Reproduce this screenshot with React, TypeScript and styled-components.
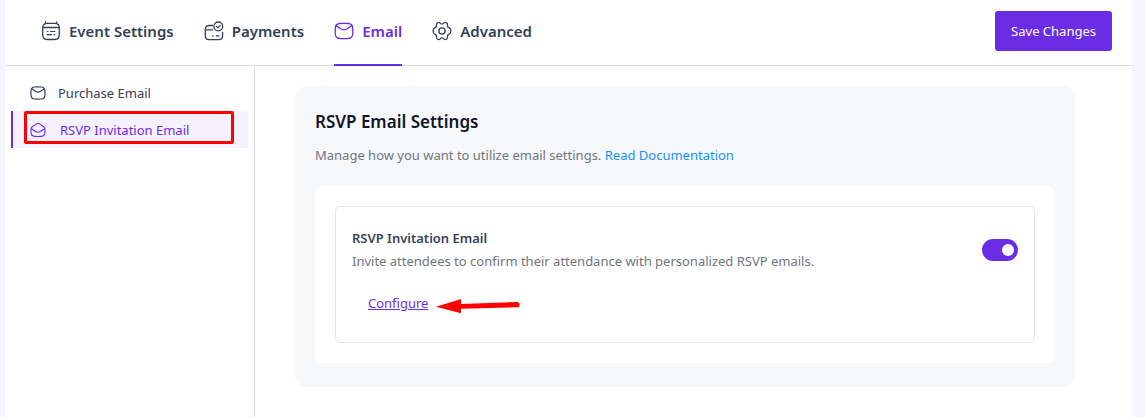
import React from "react";
import styled, { createGlobalStyle, css } from "styled-components";

const color = {
  primary: "#6b2de3",
  primaryTint: "#f5f1fe",
  ink: "#334155",
  heading: "#101529",
  title: "#3a4356",
  muted: "#6f7680",
  link: "#1890ff",
  page: "#f4f6fb",
  card: "#f7f8fa",
  rule: "#dddddd",
  box: "#e4e4ef",
  mark: "#ff0000",
};

const GlobalStyle = createGlobalStyle`
  *, *::before, *::after { box-sizing: border-box; }
  body {
    margin: 0;
    background: ${color.page};
    font-family: "Segoe UI", "Noto Sans", "Open Sans", sans-serif;
    font-size: 13px;
    line-height: 22px;
    color: ${color.ink};
  }
`;

const Page = styled.div`
  min-height: 100vh;
  padding: 0 13px 0 5px;
  display: flex;
`;

const Panel = styled.div`
  flex: 1;
  min-width: 0;
  display: flex;
  flex-direction: column;
  background: #fff;
`;

const Header = styled.header`
  display: flex;
  align-items: stretch;
  justify-content: space-between;
  border-bottom: 1px solid ${color.rule};
  padding: 0 20px 0 36px;
`;

const Tabs = styled.nav`
  display: flex;
  gap: 30px;
  margin-bottom: -1px;
`;

const Tab = styled.a<{ $active?: boolean }>`
  display: flex;
  align-items: center;
  gap: 8px;
  padding: 0 0 2px;
  border-bottom: 2px solid ${(p) => (p.$active ? color.primary : "transparent")};
  color: ${(p) => (p.$active ? color.primary : color.ink)};
  font-size: 15px;
  font-weight: 600;
  text-decoration: none;
  white-space: nowrap;
`;

const SaveButton = styled.button`
  height: 40px;
  margin: 11px 0 14px;
  padding: 0 16px;
  border: 0;
  border-radius: 3px;
  background: ${color.primary};
  color: #fff;
  font: inherit;
  white-space: nowrap;
  cursor: pointer;
`;

const Body = styled.div`
  flex: 1;
  display: flex;
`;

const Sidebar = styled.nav`
  flex: 0 0 250px;
  display: flex;
  flex-direction: column;
  padding: 8px 6px;
  border-right: 1px solid ${color.rule};
`;

const SideLink = styled.a<{ $active?: boolean }>`
  position: relative;
  display: flex;
  align-items: center;
  gap: 12px;
  height: 37px;
  padding-left: 17px;
  border-left: 2px solid transparent;
  color: ${color.ink};
  text-decoration: none;
  ${(p) =>
    p.$active &&
    css`
      gap: 14px;
      border-left-color: ${color.primary};
      background: ${color.primaryTint};
      color: ${color.primary};
    `}
`;

const Highlight = styled.span`
  position: absolute;
  inset: 0 14px 4px 11px;
  border: 3px solid ${color.mark};
  border-radius: 2px;
  pointer-events: none;
`;

const Main = styled.main`
  flex: 1;
  min-width: 0;
  padding: 20px 40px;
`;

const Card = styled.section`
  max-width: 780px;
  padding: 20px 20px 24px;
  border-radius: 12px;
  background: ${color.card};
`;

const CardTitle = styled.h2`
  margin: 0;
  color: ${color.heading};
  font-size: 17px;
  font-weight: 600;
  line-height: 32px;
`;

const CardText = styled.p`
  margin: 6px 0 20px;
  color: ${color.muted};
`;

const DocLink = styled.a`
  color: ${color.link};
  text-decoration: none;
`;

const Sheet = styled.div`
  padding: 20px;
  border-radius: 8px;
  background: #fff;
`;

const Setting = styled.div`
  display: flex;
  align-items: flex-start;
  justify-content: space-between;
  gap: 16px;
  padding: 20px 16px;
  border: 1px solid ${color.box};
  border-radius: 5px;
`;

const SettingTitle = styled.label`
  display: block;
  color: ${color.title};
  font-weight: 600;
`;

const SettingText = styled.p`
  margin: 0;
  color: ${color.muted};
  line-height: 24px;
`;

const ActionRow = styled.div`
  display: flex;
  align-items: center;
  gap: 8px;
  padding: 19px 16px 8px;
`;

const ConfigureLink = styled.a`
  color: ${color.primary};
  text-decoration: underline;
`;

const Toggle = styled.input`
  appearance: none;
  flex: none;
  display: flex;
  align-items: center;
  width: 36px;
  height: 22px;
  margin: 12px 0 0;
  padding: 0 4px;
  border-radius: 11px;
  background: #c5c9d3;
  cursor: pointer;

  &::before {
    content: "";
    width: 12px;
    height: 12px;
    border-radius: 50%;
    background: #fff;
  }

  &:checked {
    justify-content: flex-end;
    background: ${color.primary};
  }
`;

const Glyph = styled.svg`
  flex: none;
  fill: none;
  stroke: currentColor;
  stroke-linecap: round;
  stroke-linejoin: round;
`;

const CalendarIcon = () => (
  <Glyph width="20" height="20" viewBox="0 0 20 20" strokeWidth="1.3" aria-hidden="true">
    <path d="M4.5 1v1.4M15.5 1v1.4" />
    <path d="M1.7 7c0-3.4 1.5-4.7 4.6-4.7h7.4c3.1 0 4.6 1.3 4.6 4.7v6.5c0 3.4-1.5 5-4.6 5H6.3c-3.1 0-4.6-1.6-4.6-5z" />
    <path d="M1.9 6.5h16.2" />
    <path d="M6.2 10.5h.7M9.5 10.5h4.3M6.2 13.7h4.3M13.1 13.7h.7" strokeWidth="1.2" />
  </Glyph>
);

const PaymentsIcon = () => (
  <Glyph width="20" height="20" viewBox="0 0 20 20" strokeWidth="1.3" aria-hidden="true">
    <path d="M8.5 4.5H5.3c-2.7 0-4 1.3-4 3.8v6.4c0 2.6 1.3 3.9 3.9 3.9h9.5c2.6 0 3.9-1.3 3.9-3.9v-3.5" />
    <path d="M1.5 8.8h7.3M8.5 14.8h.7M12.3 14.8h2.6" />
    <circle cx="14.3" cy="5.4" r="4.4" />
    <path d="M12.5 5.6l1.3 1.2 2.3-2.5" strokeWidth="1.2" />
  </Glyph>
);

const MailIcon = ({ size = 20 }: { size?: number }) => (
  <Glyph width={size} height={size} viewBox="0 0 20 20" strokeWidth={size < 20 ? 1.5 : 1.3} aria-hidden="true">
    <path d="M1.3 7.2c.1-3.4 1.3-4.5 4.4-4.7 2.9-.2 5.7-.2 8.6 0 3.1.2 4.3 1.3 4.4 4.7.1 1.9.1 3.7 0 5.6-.1 3.4-1.3 4.5-4.4 4.7-2.9.2-5.7.2-8.6 0-3.1-.2-4.3-1.3-4.4-4.7-.1-1.9-.1-3.7 0-5.6z" />
    <path d="M2.2 4.6l4.6 3.2c2.3 1.4 4.1 1.4 6.4 0L17.8 4.6" />
  </Glyph>
);

const OpenMailIcon = () => (
  <Glyph width="16" height="16" viewBox="0 0 16 16" strokeWidth="1.1" aria-hidden="true">
    <path d="M1.1 6.8c-.1 1.5-.1 2.9 0 4.2.2 2.3 1.2 3.2 3.5 3.4 2.2.2 4.6.2 6.8 0 2.3-.2 3.3-1.1 3.5-3.4.1-1.3.1-2.7 0-4.2-.1-1-.5-1.6-1.2-2.1L9.6 1.9c-1.1-.7-2.1-.7-3.2 0L2.3 4.7c-.7.5-1.1 1.1-1.2 2.1z" />
    <path d="M1.4 6.8l4.2 2.7c1.7 1 3.1 1 4.8 0l4.2-2.7" />
  </Glyph>
);

const GearIcon = () => (
  <Glyph width="20" height="20" viewBox="0 0 20 20" strokeWidth="1.3" aria-hidden="true">
    <path d="M8.2 2.2C7.5 1.3 6.7 1.2 5.8 1.7c-1.2.6-1.5 1.3-1.3 2.3.2 1.3-.5 2.5-1.8 2.9C1.6 7.3 1.1 8 1.1 10s.5 2.7 1.6 3.1c1.3.4 2 1.6 1.8 2.9-.2 1 .1 1.7 1.3 2.3.9.5 1.7.4 2.4-.5 1-1.2 2.6-1.2 3.6 0 .7.9 1.5 1 2.4.5 1.2-.6 1.5-1.3 1.3-2.3-.2-1.3.5-2.5 1.8-2.9 1.1-.4 1.6-1.1 1.6-3.1s-.5-2.7-1.6-3.1c-1.3-.4-2-1.6-1.8-2.9.2-1-.1-1.7-1.3-2.3-.9-.5-1.7-.4-2.4.5-1 1.2-2.6 1.2-3.6 0z" />
    <circle cx="10" cy="10" r="3.1" />
  </Glyph>
);

const PointerArrow = () => (
  <svg width="84" height="22" viewBox="0 0 84 22" aria-hidden="true">
    <path d="M0 14.7L25 7v4.9L81 10a2.6 2.6 0 0 1 0 5.3L25 16.8v4.5z" fill={color.mark} />
  </svg>
);

export default function App() {
  return (
    <Page>
      <GlobalStyle />
      <Panel>
        <Header>
          <Tabs aria-label="Settings">
            <Tab href="#event"><CalendarIcon />Event Settings</Tab>
            <Tab href="#payments"><PaymentsIcon />Payments</Tab>
            <Tab href="#email" $active aria-current="page"><MailIcon />Email</Tab>
            <Tab href="#advanced"><GearIcon />Advanced</Tab>
          </Tabs>
          <SaveButton type="button">Save Changes</SaveButton>
        </Header>
        <Body>
          <Sidebar aria-label="Email settings">
            <SideLink href="#purchase"><MailIcon size={16} />Purchase Email</SideLink>
            <SideLink href="#rsvp" $active aria-current="page">
              <OpenMailIcon />RSVP Invitation Email
              <Highlight />
            </SideLink>
          </Sidebar>
          <Main>
            <Card>
              <CardTitle>RSVP Email Settings</CardTitle>
              <CardText>
                Manage how you want to utilize email settings. <DocLink href="#docs">Read Documentation</DocLink>
              </CardText>
              <Sheet>
                <Setting>
                  <div>
                    <SettingTitle htmlFor="rsvp-toggle">RSVP Invitation Email</SettingTitle>
                    <SettingText>Invite attendees to confirm their attendance with personalized RSVP emails.</SettingText>
                    <ActionRow>
                      <ConfigureLink href="#configure">Configure</ConfigureLink>
                      <PointerArrow />
                    </ActionRow>
                  </div>
                  <Toggle id="rsvp-toggle" type="checkbox" role="switch" defaultChecked />
                </Setting>
              </Sheet>
            </Card>
          </Main>
        </Body>
      </Panel>
    </Page>
  );
}
